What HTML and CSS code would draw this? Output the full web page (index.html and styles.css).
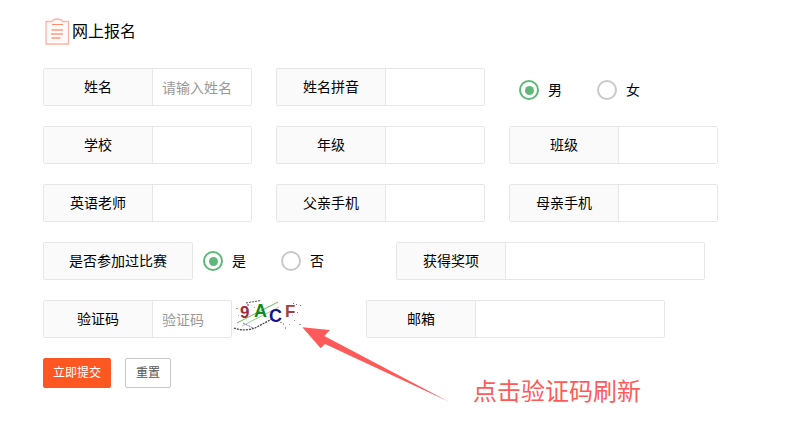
FILE: index.html
```html
<!DOCTYPE html>
<html lang="zh-CN">
<head>
<meta charset="utf-8">
<title>网上报名</title>
<link rel="stylesheet" href="styles.css">
</head>
<body>
<main class="page">
  <h1 class="title">
    <svg class="title-icon" width="25" height="27" viewBox="0 0 25 27" fill="none">
      <path d="M1 3.5H7V3C8 1.5 10 1 12 1C14.500 1 16.500 1.500 17.500 3V3.500H23.500V26H1Z" fill="#fffaf8" stroke="#ffb3a8" stroke-width="1.300"/>
      <path d="M7 6.500H18" stroke="#ff8a70" stroke-width="1"/>
      <path d="M6.500 12H18M6 16H18M6.500 20H15.500" stroke="#ff6a45" stroke-width="1"/>
    </svg>
    <span>网上报名</span>
  </h1>
  <form class="form">
    <div class="row">
      <div class="field"><label class="label">姓名</label><input class="input" placeholder="请输入姓名"></div>
      <div class="field"><label class="label">姓名拼音</label><input class="input"></div>
      <div class="radios radios-gender">
        <span class="radio checked"></span><span class="radio-text">男</span>
        <span class="radio"></span><span class="radio-text">女</span>
      </div>
    </div>
    <div class="row">
      <div class="field"><label class="label">学校</label><input class="input"></div>
      <div class="field"><label class="label">年级</label><input class="input"></div>
      <div class="field"><label class="label">班级</label><input class="input"></div>
    </div>
    <div class="row">
      <div class="field"><label class="label">英语老师</label><input class="input"></div>
      <div class="field"><label class="label">父亲手机</label><input class="input"></div>
      <div class="field"><label class="label">母亲手机</label><input class="input"></div>
    </div>
    <div class="row row-tight">
      <div class="field field-auto"><label class="label label-wide">是否参加过比赛</label></div>
      <div class="radios radios-contest">
        <span class="radio checked"></span><span class="radio-text">是</span>
        <span class="radio"></span><span class="radio-text">否</span>
      </div>
      <div class="field field-wide"><label class="label">获得奖项</label><input class="input"></div>
    </div>
    <div class="row row-tight">
      <div class="field field-code"><label class="label">验证码</label><input class="input" placeholder="验证码"></div>
      <svg class="captcha" width="70" height="34" viewBox="0 0 70 34">
        <path d="M4 23L45 2" stroke="#6fb85a" stroke-width="1"/>
        <path d="M9 26L46 7" stroke="#9ad08a" stroke-width="1"/>
        <path d="M1 28C8 31 16 30 22 28L39 19" stroke="#444" stroke-width="1.300" stroke-dasharray="2 1" fill="none"/>
        <path d="M10 23L20 28" stroke="#6a6ae0" stroke-width="1" stroke-dasharray="2 1"/>
        <path d="M13 3L28 0.500" stroke="#666" stroke-width="1.200" stroke-dasharray="2 1"/>
        <g fill="#d98a8a">
          <rect x="3" y="8" width="2" height="1"/><rect x="14" y="4" width="2" height="2"/><rect x="47" y="22" width="2" height="1"/>
          <rect x="52" y="27" width="1" height="2"/><rect x="61" y="20" width="1" height="1"/><rect x="66" y="24" width="2" height="1"/>
          <rect x="56" y="24" width="1" height="1"/><rect x="50" y="23" width="1" height="2"/><rect x="59" y="15" width="1" height="1"/>
          <rect x="21" y="7" width="1" height="1"/><rect x="5" y="15" width="1" height="1"/>
        </g>
        <g fill="#777">
          <rect x="63" y="4" width="1" height="1"/><rect x="67" y="5" width="1" height="1"/><rect x="64" y="12" width="1" height="1"/><rect x="60" y="3" width="1" height="1"/>
        </g>
        <text class="cap-char" x="7" y="18" fill="#a52a3a">9</text>
        <text class="cap-char cap-big" x="21" y="17" fill="#128a1e">A</text>
        <text class="cap-char cap-big" x="36" y="22" fill="#14148c">C</text>
        <text class="cap-char" x="52" y="17" fill="#a83c3c">F</text>
      </svg>
      <div class="field field-mail"><label class="label">邮箱</label><input class="input"></div>
    </div>
    <div class="actions">
      <button class="btn btn-primary" type="button">立即提交</button>
      <button class="btn btn-ghost" type="button">重置</button>
    </div>
  </form>
  <svg class="arrow" width="160" height="90" viewBox="0 0 160 90">
    <path d="M2.300 2.300L30 5L24.300 11L149 76.700L25 19L20.700 23.300Z" fill="#ff5a5a"/>
  </svg>
  <div class="hint">点击验证码刷新</div>
</main>
</body>
</html>
```
FILE: styles.css
```css
* { box-sizing: border-box; }
html, body { margin: 0; padding: 0; background: #fff; }
body {
  font-family: "Noto Sans CJK SC", "Liberation Sans", sans-serif;
  font-size: 14px;
  color: #000;
}
.page { position: relative; width: 797px; height: 427px; padding: 18px 0 0 43px; overflow: hidden; }
.title { display: flex; align-items: center; margin: 0 0 23px 2px; height: 27px; font-size: 16px; font-weight: 400; line-height: 25px; }
.title span { padding-bottom: 2px; }
.title-icon { display: block; margin-right: 2px; }
.form { display: flex; flex-direction: column; gap: 20px; }
.row { display: flex; height: 38px; gap: 24px; }
.row-tight { gap: 0; }
.field { display: flex; flex: none; width: 209px; height: 38px; border: 1px solid #e6e6e6; border-radius: 2px; }
.field-auto { width: 150px; }
.field-wide { width: 309px; }
.field-code { width: 189px; }
.field-mail { width: 299px; margin-left: 63px; }
.label { display: block; flex: none; width: 109px; line-height: 35px; text-align: center; background: #fafafa; border-right: 1px solid #e6e6e6; }
.label-wide { width: 148px; border-right: 0; }
.input { flex: 1; min-width: 0; height: 36px; padding: 0 9px; border: 0; outline: 0; background: #fff; font: inherit; font-size: 14px; }
.input::placeholder { color: #999; opacity: 1; }
.radios { display: flex; align-items: center; height: 38px; }
.radios-gender { margin: 3px 0 0 10px; }
.radios-contest { flex: none; width: 193px; margin-left: 10px; }
.radio { position: relative; width: 20px; height: 20px; border: 2px solid #c9c9c9; border-radius: 50%; flex: none; }
.radio.checked { border-color: #5fb878; }
.radio.checked::after { content: ""; position: absolute; left: 3.5px; top: 3.5px; width: 9px; height: 9px; border-radius: 50%; background: #5fb878; }
.radio-text { width: 58px; padding: 0 0 2px 9px; line-height: 18px; }
.captcha { display: block; flex: none; margin-left: 1px; }
.cap-char { font-family: "Liberation Sans", sans-serif; font-size: 17px; font-weight: 700; }
.cap-big { font-size: 18px; }
.actions { display: flex; gap: 14px; }
.btn { height: 30px; padding: 0 0 2px; border-radius: 2px; font: inherit; font-size: 12px; line-height: 26px; }
.btn-primary { width: 68px; color: #fff; background: #ff5722; border: 1px solid #ff5722; }
.btn-ghost { width: 46px; color: #555; background: #fff; border: 1px solid #c9c9c9; }
.arrow { position: absolute; left: 300px; top: 325px; }
.hint { position: absolute; left: 473px; top: 372px; font-size: 24px; line-height: 36px; color: #ff5a5a; font-weight: 400; }
```
